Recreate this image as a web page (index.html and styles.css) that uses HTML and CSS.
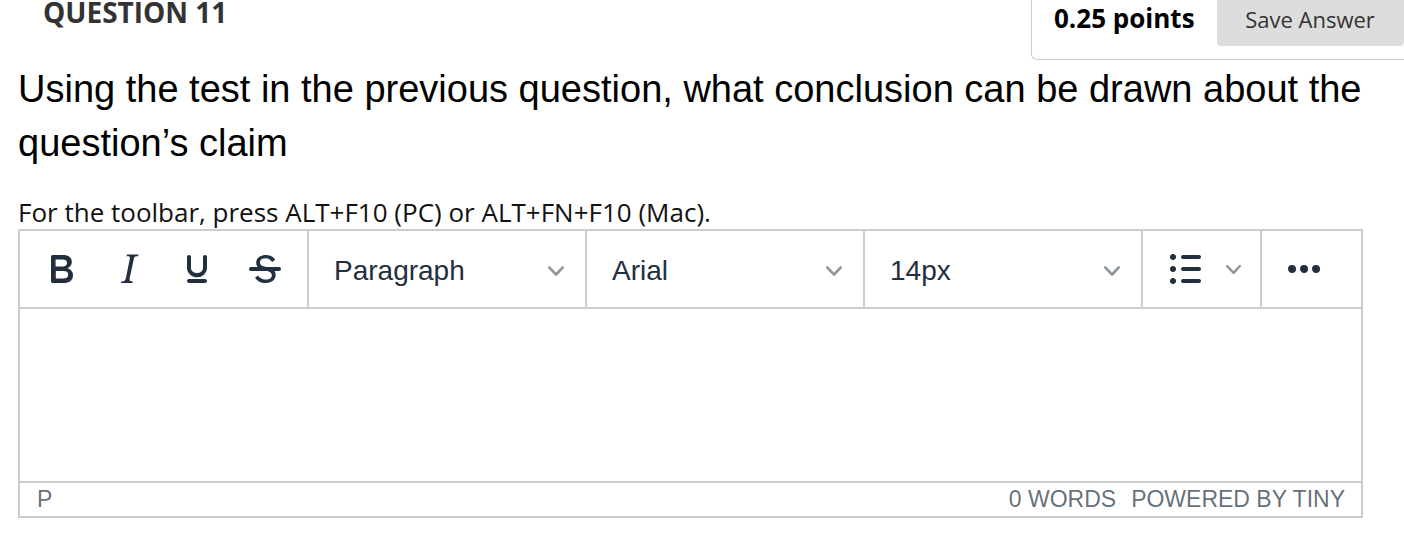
FILE: index.html
```html
<!DOCTYPE html>
<html lang="en">
<head>
    <meta charset="UTF-8">
    <meta name="viewport" content="width=device-width, initial-scale=1.0">
    <title>Question 11</title>
    <link rel="stylesheet" href="styles.css">
</head>
<body>
    <div class="question-head">
        <h3 class="question-title">QUESTION 11</h3>
        <div class="points-box">
            <span class="points">0.25 points</span>
            <button class="save-btn">Save Answer</button>
        </div>
    </div>

    <p class="question-text">Using the test in the previous question, what conclusion can be drawn about the question’s claim</p>

    <label class="toolbar-hint">For the toolbar, press ALT+F10 (PC) or ALT+FN+F10 (Mac).</label>

    <div class="editor">
        <div class="toolbar">
            <div class="tb-group">
                <button class="tb-btn" title="Bold">
                    <svg width="48" height="48" viewBox="0 0 24 24"><path d="M7.8 19c-.3 0-.5 0-.6-.2l-.2-.5V5.7c0-.2 0-.4.2-.5l.6-.2h5c1.5 0 2.7.3 3.5 1 .7.6 1.1 1.4 1.1 2.5a3 3 0 0 1-.6 1.9c-.4.6-1 1-1.6 1.2.4.1.9.3 1.3.6s.8.7 1 1.2c.4.4.5 1 .5 1.6 0 1.3-.4 2.3-1.3 3-.8.7-2.1 1-3.8 1H7.8zm5-8.3c.6 0 1.2-.1 1.6-.5.4-.3.6-.7.6-1.3 0-1.1-.8-1.7-2.3-1.7H9.3v3.5h3.4zm.5 6c.7 0 1.3-.1 1.7-.4.4-.4.6-.9.6-1.5s-.2-1-.7-1.4c-.4-.3-1-.4-2-.4H9.4v3.8h4z"/></svg>
                </button>
                <button class="tb-btn" title="Italic">
                    <svg width="48" height="48" viewBox="0 0 24 24"><path d="M16.7 4.7l-.1.9h-.3c-.6 0-1 0-1.4.3-.3.3-.4.6-.5 1.1l-2.1 9.8v.6c0 .5.4.8 1.4.8h.2l-.2.8H8l.2-.8h.2c1.1 0 1.8-.5 2-1.5l2-9.8.1-.5c0-.6-.4-.8-1.4-.8h-.3l.2-.9h5.8z"/></svg>
                </button>
                <button class="tb-btn" title="Underline">
                    <svg width="48" height="48" viewBox="0 0 24 24"><path d="M16 5c.6 0 1 .4 1 1v5.5a4 4 0 0 1-.4 1.8l-1 1.4a5.3 5.3 0 0 1-5.5 1 5 5 0 0 1-1.6-1c-.5-.4-.8-.9-1.1-1.4a4 4 0 0 1-.4-1.8V6c0-.6.4-1 1-1s1 .4 1 1v5.5c0 .3 0 .6.2 1l.6.7a3.3 3.3 0 0 0 2.2.8 3.4 3.4 0 0 0 2.2-.8c.3-.2.4-.5.6-.8l.2-.9V6c0-.6.4-1 1-1zM8 17h8c.6 0 1 .4 1 1s-.4 1-1 1H8a1 1 0 0 1 0-2z"/></svg>
                </button>
                <button class="tb-btn" title="Strikethrough">
                    <svg width="48" height="48" viewBox="0 0 24 24"><path d="M15.6 8.5c-.5-.7-1-1.1-1.3-1.3-.6-.4-1.3-.6-2-.6-2.7 0-2.8 1.7-2.8 2.1 0 1.6 1.8 2 3.2 2.3 4.4.9 4.6 2.8 4.6 3.9 0 1.4-.7 4.1-5 4.1A6.2 6.2 0 0 1 7 16.4l1.5-1.1c.4.6 1.6 2 3.7 2 1.6 0 2.5-.4 3-1.2.4-.8.3-2-.8-2.6-.7-.4-1.6-.7-2.9-1-1-.2-3.9-.8-3.9-3.6C7.6 6 10.3 5 12.4 5c2.9 0 4.2 1.6 4.7 2.4l-1.5 1.1z"/><path d="M5 11h14a1 1 0 0 1 0 2H5a1 1 0 0 1 0-2z"/></svg>
                </button>
            </div>
            <div class="tb-group">
                <button class="tb-select">
                    <span>Paragraph</span>
                    <svg class="chevron" width="16" height="16" viewBox="0 0 10 10"><path d="M8.7 2.2c.3-.3.8-.3 1 0 .4.4.4.9 0 1.2L5.7 7.8c-.3.3-.9.3-1.2 0L.2 3.4a.8.8 0 0 1 0-1.2c.3-.3.8-.3 1.1 0L5 6l3.7-3.8z"/></svg>
                </button>
            </div>
            <div class="tb-group">
                <button class="tb-select">
                    <span>Arial</span>
                    <svg class="chevron" width="16" height="16" viewBox="0 0 10 10"><path d="M8.7 2.2c.3-.3.8-.3 1 0 .4.4.4.9 0 1.2L5.7 7.8c-.3.3-.9.3-1.2 0L.2 3.4a.8.8 0 0 1 0-1.2c.3-.3.8-.3 1.1 0L5 6l3.7-3.8z"/></svg>
                </button>
            </div>
            <div class="tb-group">
                <button class="tb-select">
                    <span>14px</span>
                    <svg class="chevron" width="16" height="16" viewBox="0 0 10 10"><path d="M8.7 2.2c.3-.3.8-.3 1 0 .4.4.4.9 0 1.2L5.7 7.8c-.3.3-.9.3-1.2 0L.2 3.4a.8.8 0 0 1 0-1.2c.3-.3.8-.3 1.1 0L5 6l3.7-3.8z"/></svg>
                </button>
            </div>
            <div class="tb-group">
                <button class="tb-split">
                    <svg width="48" height="48" viewBox="0 0 24 24"><path d="M11 5h8c.6 0 1 .4 1 1s-.4 1-1 1h-8a1 1 0 0 1 0-2zm0 6h8c.6 0 1 .4 1 1s-.4 1-1 1h-8a1 1 0 0 1 0-2zm0 6h8c.6 0 1 .4 1 1s-.4 1-1 1h-8a1 1 0 0 1 0-2zM4.5 6c0-.4.1-.8.4-1 .3-.4.7-.5 1.1-.5.4 0 .8.1 1 .4.4.3.5.7.5 1.1 0 .4-.1.8-.4 1-.3.4-.7.5-1.1.5-.4 0-.8-.1-1-.4-.4-.3-.5-.7-.5-1.1zm0 6c0-.4.1-.8.4-1 .3-.4.7-.5 1.1-.5.4 0 .8.1 1 .4.4.3.5.7.5 1.1 0 .4-.1.8-.4 1-.3.4-.7.5-1.1.5-.4 0-.8-.1-1-.4-.4-.3-.5-.7-.5-1.1zm0 6c0-.4.1-.8.4-1 .3-.4.7-.5 1.1-.5.4 0 .8.1 1 .4.4.3.5.7.5 1.1 0 .4-.1.8-.4 1-.3.4-.7.5-1.1.5-.4 0-.8-.1-1-.4-.4-.3-.5-.7-.5-1.1z"/></svg>
                    <svg class="chevron" width="15" height="15" viewBox="0 0 10 10"><path d="M8.7 2.2c.3-.3.8-.3 1 0 .4.4.4.9 0 1.2L5.7 7.8c-.3.3-.9.3-1.2 0L.2 3.4a.8.8 0 0 1 0-1.2c.3-.3.8-.3 1.1 0L5 6l3.7-3.8z"/></svg>
                </button>
            </div>
            <div class="tb-group">
                <button class="tb-btn" title="More">
                    <svg width="48" height="48" viewBox="0 0 24 24"><path d="M6 10a2 2 0 0 0-2 2c0 1.1.9 2 2 2a2 2 0 0 0 2-2 2 2 0 0 0-2-2zm12 0a2 2 0 0 0-2 2c0 1.1.9 2 2 2a2 2 0 0 0 2-2 2 2 0 0 0-2-2zm-6 0a2 2 0 0 0-2 2c0 1.1.9 2 2 2a2 2 0 0 0 2-2 2 2 0 0 0-2-2z"/></svg>
                </button>
            </div>
        </div>

        <div class="edit-area" contenteditable="true"></div>

        <div class="statusbar">
            <span class="path">P</span>
            <div class="status-right">
                <span>0 WORDS</span>
                <span>POWERED BY TINY</span>
            </div>
        </div>
    </div>
</body>
</html>
```

FILE: styles.css
```css
body {
    margin: 0;
    font-family: "Open Sans", sans-serif;
    color: #000;
    background: #fff;
}
.question-head {
    display: flex;
    justify-content: space-between;
    align-items: flex-start;
}
.question-title {
    margin: 0;
    padding-left: 43px;
    font-size: 28px;
    line-height: 24px;
    font-weight: 700;
    color: #333;
}
.points-box {
    display: flex;
    align-items: flex-start;
    width: 373px;
    height: 60px;
    border-left: 1px solid #ccc;
    border-bottom: 1px solid #ccc;
    border-bottom-left-radius: 6px;
    box-sizing: border-box;
}
.points {
    padding: 0 22px 0 22px;
    font-size: 26px;
    line-height: 36px;
    font-weight: 700;
    white-space: nowrap;
    color: #000;
}
.save-btn {
    flex-shrink: 0;
    width: 187px;
    height: 46px;
    padding: 0 0 9px;
    border: none;
    border-radius: 0 0 4px 4px;
    background-color: #ddd;
    font-family: "Open Sans", sans-serif;
    font-size: 22px;
    color: #333;
    cursor: pointer;
}
.question-text {
    margin: 2px 0 0;
    padding: 0 30px 0 18px;
    font-family: "Liberation Sans", Arial, sans-serif;
    font-size: 38px;
    line-height: 54px;
    color: #000;
}
.toolbar-hint {
    display: block;
    margin: 26px 0 1px;
    padding-left: 18px;
    font-size: 26px;
    line-height: 32px;
    color: #111;
}
.editor {
    margin: 0 41px 0 18px;
    border: 2px solid #ccc;
    font-family: "Liberation Sans", Arial, sans-serif;
    color: #222f3e;
}
.toolbar {
    display: flex;
    border-bottom: 2px solid #ccc;
}
.tb-group {
    display: flex;
    padding: 0 8px;
    border-left: 2px solid #ccc;
}
.tb-group:first-child {
    border-left: none;
    padding-left: 7px;
}
.tb-group:last-child {
    flex: 1;
}
.tb-btn,
.tb-select,
.tb-split {
    display: flex;
    align-items: center;
    height: 68px;
    margin: 4px 0;
    padding: 0;
    border: none;
    background: none;
    color: #222f3e;
    cursor: pointer;
}
.tb-btn {
    justify-content: center;
    width: 68px;
}
.tb-btn svg,
.tb-split svg {
    fill: #222f3e;
}
.tb-select {
    justify-content: space-between;
    width: 260px;
    padding: 3px 13px 0 17px;
    font-family: "Liberation Sans", Arial, sans-serif;
    font-size: 28px;
}
.tb-split {
    width: 101px;
    padding-left: 10px;
    gap: 17px;
}
.chevron {
    fill: #222f3e;
    opacity: 0.5;
}
.edit-area {
    height: 172px;
    outline: none;
}
.statusbar {
    display: flex;
    justify-content: space-between;
    align-items: center;
    height: 33px;
    padding: 0 16px 0 17px;
    border-top: 2px solid #ccc;
    font-size: 23px;
    color: rgba(34, 47, 62, 0.7);
}
.status-right {
    display: flex;
    gap: 15px;
}
```
